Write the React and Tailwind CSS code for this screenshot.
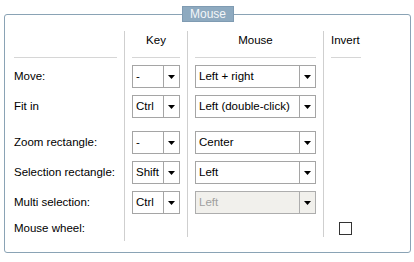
import React from 'react';

const Arrow = () => (
  <svg width="7" height="4" viewBox="0 0 7 4" className="block">
    <polygon points="0,0 7,0 3.5,4" fill="#000" />
  </svg>
);

const Select = ({ value, width, disabled }) => (
  <div
    className={`flex h-[23px] border ${width} ${
      disabled ? 'border-[#adadad] bg-[#f1f0ec] text-[#a0a0a0]' : 'border-[#a5a5a5] bg-white text-black'
    }`}
  >
    <div className="flex-1 flex items-center pl-[3px] whitespace-nowrap overflow-hidden">{value}</div>
    <div className={`w-[16px] flex items-center justify-center border-l ${disabled ? 'border-[#adadad]' : 'border-[#a5a5a5]'}`}>
      <Arrow />
    </div>
  </div>
);

const rows = [
  { label: 'Move:', key: '-', mouse: 'Left + right', pt: 'pt-[7px]' },
  { label: 'Fit in', key: 'Ctrl', mouse: 'Left (double-click)', pt: 'pt-[7px]' },
  { label: 'Zoom rectangle:', key: '-', mouse: 'Center', pt: 'pt-[13px]' },
  { label: 'Selection rectangle:', key: 'Shift', mouse: 'Left', pt: 'pt-[7px]' },
  { label: 'Multi selection:', key: 'Ctrl', mouse: 'Left', pt: 'pt-[7px]', disabled: true },
];

export default function App() {
  return (
    <div
      className="w-[414px] h-[262px] bg-white pt-[14px] pl-[4px] text-[11.5px] text-black"
      style={{ fontFamily: '"Liberation Sans", Arial, sans-serif' }}
    >
      <div className="relative w-[407px] h-[239px] border border-[#8aa3b5] rounded-[3px] pt-[16px] pl-[9px]">
        {/* title tab */}
        <div className="absolute -top-[9px] left-[177px] w-[52px] h-[16px] bg-[#8eaac0] border border-[#7f9bb2] text-[#f3f6f9] text-[12px] flex items-center justify-center leading-none">
          Mouse
        </div>

        <div className="grid grid-cols-[103px_1px_48px_1px_121px_1px_30px] gap-x-[7px]">
          {/* headers */}
          <div className="h-[27px] border-b border-[#d6d6d6]" />
          <div className="row-span-7 h-full bg-[#cfcfcf]" />
          <div className="h-[27px] border-b border-[#d6d6d6] text-center leading-[18px]">Key</div>
          <div className="row-span-7 h-[206px] bg-[#cfcfcf]" />
          <div className="h-[27px] border-b border-[#d6d6d6] text-center leading-[18px]">Mouse</div>
          <div className="row-span-7 h-[206px] bg-[#cfcfcf]" />
          <div className="h-[27px] border-b border-[#d6d6d6] leading-[18px]">Invert</div>

          {rows.map((r) => (
            <React.Fragment key={r.label}>
              <div className={r.pt}>
                <div className="h-[23px] flex items-center whitespace-nowrap">{r.label}</div>
              </div>
              <div className={r.pt}>
                <Select value={r.key} width="w-[48px]" />
              </div>
              <div className={r.pt}>
                <Select value={r.mouse} width="w-[121px]" disabled={r.disabled} />
              </div>
              <div className={r.pt} />
            </React.Fragment>
          ))}

          {/* mouse wheel */}
          <div className="h-[27px] pt-[8px]">
            <div className="h-[13px] flex items-center whitespace-nowrap">Mouse wheel:</div>
          </div>
          <div />
          <div />
          <div className="pt-[8px] pl-[8px]">
            <div className="w-[13px] h-[13px] border border-[#333] bg-white" />
          </div>
        </div>
      </div>
    </div>
  );
}
